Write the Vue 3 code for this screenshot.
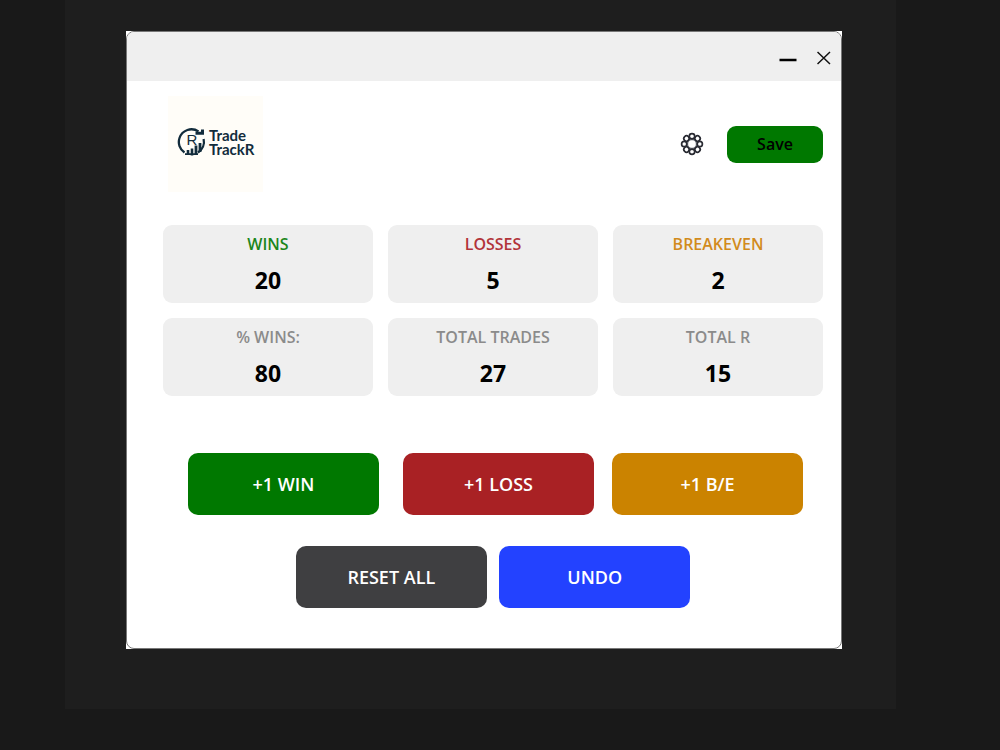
<script setup>
import { ref, computed } from 'vue'

const wins = ref(20)
const losses = ref(5)
const breakeven = ref(2)

const total = computed(() => wins.value + losses.value + breakeven.value)
const rate = computed(() => {
  const decided = wins.value + losses.value
  return decided ? Math.round((wins.value / decided) * 100) : 0
})
const stats = computed(() => [
  { label: 'WINS', value: wins.value, tone: 'green' },
  { label: 'LOSSES', value: losses.value, tone: 'red' },
  { label: 'BREAKEVEN', value: breakeven.value, tone: 'amber' },
  { label: '% WINS:', value: rate.value, tone: 'grey' },
  { label: 'TOTAL TRADES', value: total.value, tone: 'grey' },
  { label: 'TOTAL R', value: wins.value - losses.value, tone: 'grey' },
])

const history = []
function add(counter) {
  counter.value++
  history.push(counter)
}
function undo() {
  const last = history.pop()
  if (last) last.value--
}
function reset() {
  wins.value = losses.value = breakeven.value = 0
  history.length = 0
}
const petals = [0, 45, 90, 135, 180, 225, 270, 315]
</script>

<template>
  <div class="desktop">
    <div class="backdrop">
      <div class="frame">
        <main class="window">
          <header class="titlebar">
            <button class="plain" aria-label="Minimize">
              <svg width="18" height="18" viewBox="0 0 18 18"><path d="M0.5 11H17.5" stroke="#000" stroke-width="2.4" /></svg>
            </button>
            <button class="plain" aria-label="Close">
              <svg width="14" height="14" viewBox="0 0 14 14"><path d="M0.5 1L13 13M13 1L0.5 13" stroke="#111" stroke-width="1.5" /></svg>
            </button>
          </header>

          <section class="body">
            <div class="top">
              <div class="logo">
                <svg width="29" height="30" viewBox="0 0 29 30" fill="none" stroke="#122c3c">
                  <path d="M7.5 25.5A12.5 12.5 0 0 1 2.5 11A12.5 12.5 0 0 1 21.5 4.5" stroke-width="2.3" />
                  <path d="M26.6 12A12.5 12.5 0 0 1 21 25.5" stroke-width="2.3" />
                  <path d="M18.5 6.2H25.5V2.6" stroke-width="3" />
                  <path d="M11 28V23M15 28.5V21.5" stroke-width="2.6" />
                  <path d="M19 28V18.5M23 25V16" stroke-width="2.8" />
                  <path d="M8 27.2H21" stroke-width="1.8" />
                  <text x="9.5" y="18" class="mark">R</text>
                </svg>
                <div class="name"><span>Trade</span><span>TrackR</span></div>
              </div>
              <div class="tools">
                <button class="plain" aria-label="Settings">
                  <svg width="24" height="24" viewBox="0 0 24 24" fill="none">
                    <circle cx="12" cy="12" r="4.8" stroke="#7d8088" stroke-width="2" />
                    <g stroke="#292b33" stroke-width="1.7">
                      <ellipse v-for="a in petals" :key="a" cx="12" cy="4.2" rx="2.7" ry="2.6" :transform="`rotate(${a} 12 12)`" />
                    </g>
                  </svg>
                </button>
                <button class="save">Save</button>
              </div>
            </div>

            <div class="stats">
              <div v-for="s in stats" :key="s.label" class="card">
                <span class="label" :class="s.tone">{{ s.label }}</span>
                <strong class="value">{{ s.value }}</strong>
              </div>
            </div>

            <div class="actions record">
              <button class="action win" @click="add(wins)">+1 WIN</button>
              <button class="action loss" @click="add(losses)">+1 LOSS</button>
              <button class="action even" @click="add(breakeven)">+1 B/E</button>
            </div>
            <div class="actions manage">
              <button class="action reset" @click="reset">RESET ALL</button>
              <button class="action undo" @click="undo">UNDO</button>
            </div>
          </section>
        </main>
      </div>
    </div>
  </div>
</template>

<style>
body {
  margin: 0;
  background: #191919;
}
</style>

<style scoped>
.desktop {
  box-sizing: border-box;
  min-height: 100vh;
  padding: 0 104px 42px 65px;
  background: #191919;
  font-family: "Open Sans", "Noto Sans", sans-serif;
}
.backdrop {
  padding: 31px 54px 60px 61px;
  background: #1e1e1e;
}
.frame {
  background: #fff;
}
.window {
  border: 1px solid #777;
  border-radius: 8px;
  overflow: hidden;
  background: #fff;
}
button {
  padding: 0;
  border: 0;
  font-family: inherit;
  font-weight: 600;
  cursor: pointer;
}
.plain {
  display: flex;
  background: none;
}
.titlebar {
  display: flex;
  align-items: center;
  justify-content: flex-end;
  gap: 20px;
  height: 49px;
  padding: 3px 10px 0 0;
  box-sizing: border-box;
  background: #efefef;
}
.body {
  padding: 15px 18px 40px 36px;
}
.top {
  display: flex;
  align-items: center;
  justify-content: space-between;
  margin-bottom: 33px;
}
.logo {
  display: flex;
  align-items: center;
  gap: 3px;
  box-sizing: border-box;
  width: 95px;
  height: 96px;
  margin-left: 5px;
  padding: 0 0 4px 9px;
  background: #fffdf8;
}
.logo svg {
  flex: none;
}
.mark {
  fill: #122c3c;
  stroke: none;
  font: 400 15px "Liberation Sans", sans-serif;
}
.name {
  display: flex;
  flex-direction: column;
  color: #122c3c;
  font: 700 15px/14px Lato, sans-serif;
}
.tools {
  display: flex;
  align-items: center;
  gap: 23px;
}
.save {
  width: 96px;
  height: 37px;
  border-radius: 9px;
  background: #007800;
  color: #000;
  font-size: 16px;
}
.stats {
  display: grid;
  grid-template-columns: repeat(3, 1fr);
  gap: 15px;
  margin-bottom: 57px;
}
.card {
  display: flex;
  flex-direction: column;
  align-items: center;
  gap: 6px;
  box-sizing: border-box;
  height: 78px;
  padding-top: 9px;
  border-radius: 9px;
  background: #efefef;
}
.label {
  font-size: 16px;
  font-weight: 600;
  line-height: 20px;
}
.value {
  font-size: 23px;
  font-weight: 700;
  line-height: 40px;
  height: 40px;
  color: #000;
}
.green { color: #1b861b; }
.red { color: #b2343a; }
.amber { color: #d28b1c; }
.grey { color: #8b8b8b; }
.actions {
  display: flex;
}
.record {
  gap: 18px;
  margin-bottom: 31px;
  padding: 0 20px 0 25px;
}
.record .action {
  flex: 1;
}
.record .win {
  margin-right: 6px;
}
.manage {
  justify-content: center;
  gap: 12px;
}
.manage .action {
  width: 29%;
}
.action {
  height: 62px;
  border-radius: 10px;
  color: #fff;
  font-size: 18px;
}
.win { background: #007800; }
.loss { background: #a92124; }
.even { background: #cb8300; }
.reset { background: #3f3f41; }
.undo { background: #2342ff; }
</style>
